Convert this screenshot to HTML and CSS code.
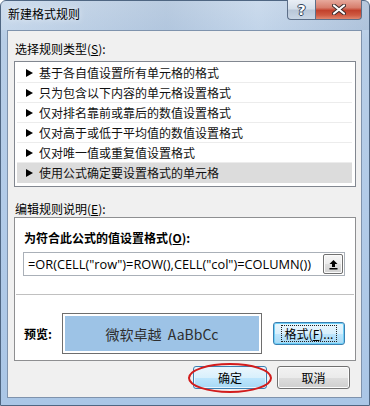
FILE: index.html
```html
<!DOCTYPE html>
<html lang="zh-CN">
<head>
<meta charset="utf-8">
<link rel="stylesheet" href="styles.css">
</head>
<body>
<div class="window">
  <div class="titlebar">
    <span class="title">新建格式规则</span>
    <div class="caption">
      <span class="cap-help">?</span>
      <span class="cap-close">
        <svg width="14" height="11" viewBox="0 0 14 11"><path d="M2 1.5 L12 9.5 M12 1.5 L2 9.5" stroke="#3a2a2a" stroke-width="4" stroke-linecap="round"/><path d="M2 1.5 L12 9.5 M12 1.5 L2 9.5" stroke="#fff" stroke-width="2.2" stroke-linecap="round"/></svg>
      </span>
    </div>
  </div>
  <div class="client">
    <div class="label top-label">选择规则类型(<u>S</u>):</div>
    <div class="rulelist">
      <div class="rule"><span class="tri"><svg width="7" height="8" viewBox="0 0 7 8"><path d="M0 0 L7 4 L0 8 Z" fill="#000"/></svg></span>基于各自值设置所有单元格的格式</div>
      <div class="rule"><span class="tri"><svg width="7" height="8" viewBox="0 0 7 8"><path d="M0 0 L7 4 L0 8 Z" fill="#000"/></svg></span>只为包含以下内容的单元格设置格式</div>
      <div class="rule"><span class="tri"><svg width="7" height="8" viewBox="0 0 7 8"><path d="M0 0 L7 4 L0 8 Z" fill="#000"/></svg></span>仅对排名靠前或靠后的数值设置格式</div>
      <div class="rule"><span class="tri"><svg width="7" height="8" viewBox="0 0 7 8"><path d="M0 0 L7 4 L0 8 Z" fill="#000"/></svg></span>仅对高于或低于平均值的数值设置格式</div>
      <div class="rule"><span class="tri"><svg width="7" height="8" viewBox="0 0 7 8"><path d="M0 0 L7 4 L0 8 Z" fill="#000"/></svg></span>仅对唯一值或重复值设置格式</div>
      <div class="rule selected"><span class="tri"><svg width="7" height="8" viewBox="0 0 7 8"><path d="M0 0 L7 4 L0 8 Z" fill="#000"/></svg></span>使用公式确定要设置格式的单元格</div>
    </div>
    <div class="label desc-label">编辑规则说明(<u>E</u>):</div>
    <div class="descbox">
      <div class="bold-label">为符合此公式的值设置格式(<u>O</u>):</div>
      <div class="formula">
        <span class="formula-text">=OR(CELL("row")=ROW(),CELL("col")=COLUMN())</span>
        <span class="collapse-btn">
          <svg width="11" height="11" viewBox="0 0 11 11"><path d="M5.5 1 L1.5 5 H4 V8 H7 V5 H9.5 Z" fill="#000"/><rect x="1.5" y="9" width="8" height="1.5" fill="#000"/></svg>
        </span>
      </div>
      <div class="sep"></div>
      <div class="preview-row">
        <span class="bold-label preview-label">预览:</span>
        <div class="preview"><div class="preview-fill">微软卓越&nbsp; AaBbCc</div></div>
        <span class="btn format-btn"><span class="focus">格式(<u>F</u>)...</span></span>
      </div>
    </div>
    <div class="btn-row">
      <span class="ok-wrap">
        <span class="btn ok-btn">确定</span>
        <svg class="ring" width="86" height="32" viewBox="0 0 86 32"><ellipse cx="43" cy="16" rx="41" ry="14" fill="none" stroke="#d21c1c" stroke-width="2"/></svg>
      </span>
      <span class="btn cancel-btn">取消</span>
    </div>
  </div>
</div>
</body>
</html>
```

FILE: styles.css
```css
* { box-sizing: border-box; }
html, body { margin: 0; padding: 0; }
body {
  width: 370px;
  height: 406px;
  overflow: hidden;
  font-family: "Noto Sans CJK SC", "Open Sans", sans-serif;
  font-size: 12px;
  color: #000;
  background: #ffffff;
}
.window {
  width: 370px;
  height: 406px;
  border: 1px solid #4f6682;
  border-radius: 6px 6px 0 0;
  background: linear-gradient(180deg, #c6d7ea 0%, #b7cde6 10%, #b2cbe8 50%, #aac6e6 100%);
  display: flex;
  flex-direction: column;
}
.titlebar {
  height: 29px;
  display: flex;
  align-items: flex-start;
  padding-left: 7px;
  padding-right: 7px;
  background: linear-gradient(90deg, rgba(255,255,255,0.15), rgba(150,170,195,0.25) 45%, rgba(255,255,255,0.1) 70%, rgba(120,140,170,0.2));
}
.title {
  line-height: 16px;
  margin-top: 5px;
  font-size: 12px;
  color: #000;
  text-shadow: 0 0 6px rgba(255,255,255,0.9);
}
.caption {
  margin-left: auto;
  display: flex;
  margin-top: -1px;
}
.cap-help, .cap-close {
  height: 20px;
  display: flex;
  align-items: center;
  justify-content: center;
  border: 1px solid #5d6f88;
  border-top: none;
}
.cap-help {
  width: 28px;
  border-radius: 0 0 0 4px;
  border-right: none;
  background: linear-gradient(180deg, #e9eef5 0%, #d5dfea 45%, #b9c7d8 55%, #c9d6e5 100%);
  font-family: "DejaVu Sans", sans-serif;
  font-weight: bold;
  font-size: 14px;
  color: #fff;
  text-shadow: 0 0 1px #34465e, 1px 0 0 #34465e, -1px 0 0 #34465e, 0 1px 0 #34465e, 0 -1px 0 #34465e;
}
.cap-close {
  width: 47px;
  border-radius: 0 0 4px 0;
  background: linear-gradient(180deg, #e7a99c 0%, #d77e6d 40%, #c2412c 55%, #cf5a42 80%, #e0876f 100%);
}
.client {
  flex: 1;
  margin: 0 7px 7px 6px;
  border: 1px solid #7f93ad;
  background: #f0f0f0;
  padding: 0 4px 0 6px;
  display: flex;
  flex-direction: column;
  position: relative;
}
.label {
  line-height: 16px;
  padding-left: 1px;
  color: #000;
}
.top-label { margin-top: 10px; }
.rulelist {
  margin-top: 4px;
  width: 342px;
  border: 1px solid #828790;
  background: #fff;
  padding: 1px 1px 3px 1px;
}
.rule {
  height: 20px;
  line-height: 19px;
  border-bottom: 1px solid #ececec;
  margin: 0 2px 0 1px;
  display: flex;
  align-items: center;
  color: #111;
}
.rule.selected {
  background: #dcdcdc;
  border-bottom-color: #dcdcdc;
}
.tri {
  width: 22px;
  padding-left: 9px;
  display: flex;
  align-items: center;
}
.desc-label { margin-top: 14px; }
.descbox {
  width: 342px;
  height: 144px;
  border: 1px solid #8e8f91;
  background: #fff;
  padding: 12px 1px 0 1px;
  display: flex;
  flex-direction: column;
}
.bold-label {
  font-weight: bold;
  line-height: 16px;
  padding-left: 8px;
  color: #000;
}
.formula {
  margin: 6px 0 0 7px;
  width: 322px;
  height: 24px;
  border: 1px solid #aab0b8;
  background: #fff;
  display: flex;
  align-items: center;
  padding-left: 4px;
}
.formula-text {
  font-family: "Open Sans", sans-serif;
  font-size: 12.8px;
  color: #000;
  white-space: nowrap;
}
.collapse-btn {
  margin-left: auto;
  margin-right: 1px;
  width: 20px;
  height: 20px;
  border: 1px solid #707070;
  border-radius: 2px;
  background: linear-gradient(180deg, #f6f6f6 0%, #ebebeb 50%, #dddddd 51%, #d2d2d2 100%);
  box-shadow: inset 0 0 0 1px #fbfbfb;
  display: flex;
  align-items: center;
  justify-content: center;
}
.sep {
  margin-top: 18px;
  height: 1px;
  background: #c0c0c0;
}
.preview-row {
  margin-top: 18px;
  display: flex;
  align-items: center;
}
.preview-label { width: 46px; }
.preview {
  width: 200px;
  height: 41px;
  border: 1px solid #6e6e6e;
  padding: 2px;
  background: #fff;
}
.preview-fill {
  width: 100%;
  height: 100%;
  background: #9dc3e6;
  display: flex;
  align-items: center;
  justify-content: center;
  font-size: 14px;
  color: #2e2e2e;
}
.btn {
  height: 23px;
  border: 1px solid #707070;
  border-radius: 3px;
  background: linear-gradient(180deg, #f2f2f2 0%, #ebebeb 50%, #dddddd 51%, #cfcfcf 100%);
  box-shadow: inset 0 0 0 1px #fcfcfc;
  display: flex;
  align-items: center;
  justify-content: center;
  color: #000;
}
.format-btn {
  width: 72px;
  margin-left: 11px;
  border-color: #3c7fb1;
  box-shadow: inset 0 0 0 1px #6fd0f7;
  background: linear-gradient(180deg, #eaf6fd 0%, #d9f0fc 50%, #bee6fd 51%, #a7d9f5 100%);
}
.focus {
  outline: 1px dotted #222;
  outline-offset: 0;
  padding: 0 3px;
  line-height: 15px;
}
.btn-row {
  margin-top: 5px;
  display: flex;
  justify-content: flex-end;
  padding-right: 7px;
  gap: 10px;
}
.ok-wrap { position: relative; display: block; }
.ok-btn {
  width: 74px;
  border-color: #3c7fb1;
  background: linear-gradient(180deg, #eaf6fd 0%, #d9f0fc 50%, #bee6fd 51%, #a7d9f5 100%);
  box-shadow: inset 0 0 0 1px #e6f5fd;
}
.cancel-btn { width: 73px; }
.ring {
  position: absolute;
  left: -6px;
  top: -4px;
  pointer-events: none;
}
u { text-decoration: underline; text-underline-offset: 1px; }
```
